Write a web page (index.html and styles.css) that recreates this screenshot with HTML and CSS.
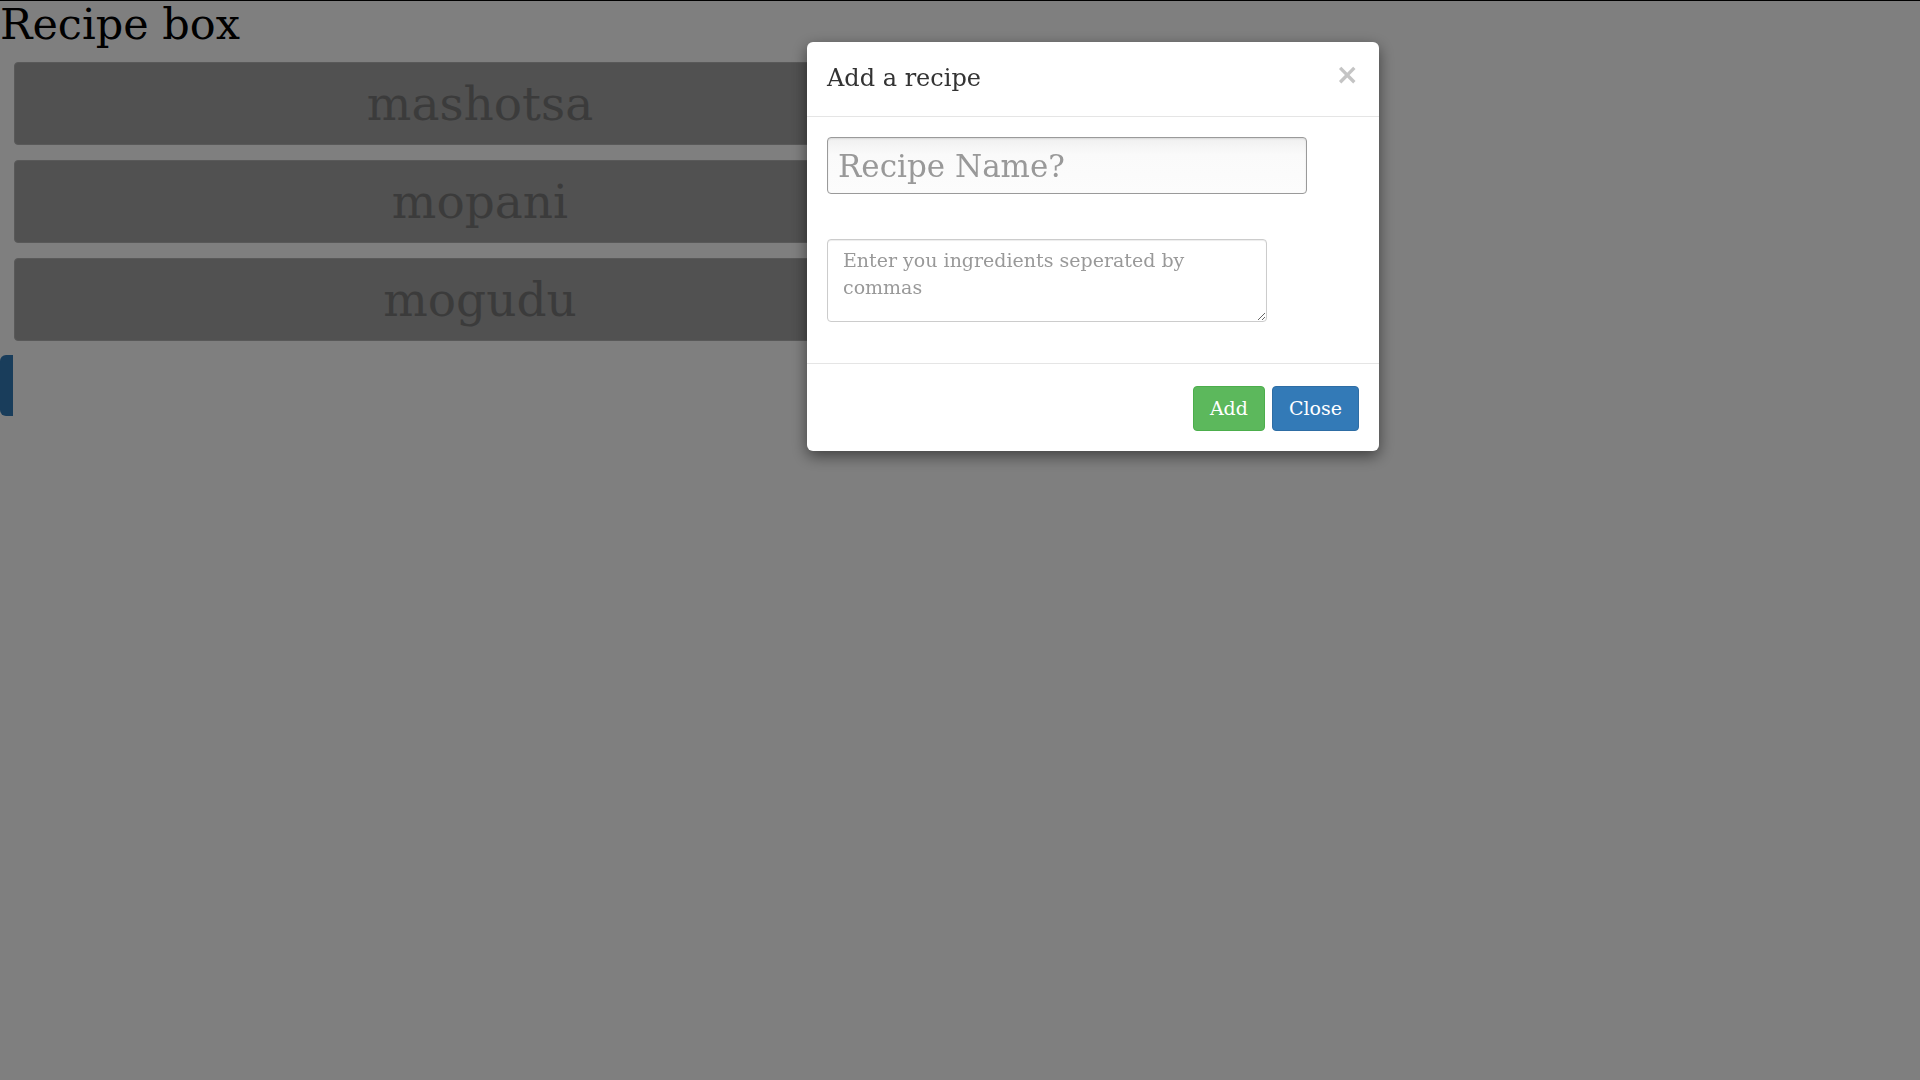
FILE: index.html
```html
<!DOCTYPE html>
<html>
<head>
<meta charset="utf-8">
<title>Recipe box</title>
<link rel="stylesheet" href="styles.css">
</head>
<body>
<div class="page">
  <h1 class="page-title">Recipe box</h1>
  <div class="recipe-list">
    <div class="recipe">mashotsa</div>
    <div class="recipe">mopani</div>
    <div class="recipe">mogudu</div>
  </div>
  <div class="add-trigger"></div>
</div>
<div class="backdrop">
  <div class="modal">
    <div class="modal-header">
      <h4 class="modal-title">Add a recipe</h4>
      <button class="close" type="button">×</button>
    </div>
    <div class="modal-body">
      <input class="name-input" type="text" placeholder="Recipe Name?">
      <textarea class="ingredients" placeholder="Enter you ingredients seperated by commas"></textarea>
    </div>
    <div class="modal-footer">
      <button class="btn btn-success" type="button">Add</button>
      <button class="btn btn-primary" type="button">Close</button>
    </div>
  </div>
</div>
</body>
</html>
```
FILE: styles.css
```css
html, body {
  margin: 0;
  padding: 0;
  background: #ffffff;
  font-family: "DejaVu Serif", serif;
  color: #000;
}
.page {
  display: flex;
  flex-direction: column;
  align-items: flex-start;
}
.page-title {
  margin: 0;
  font-size: 43px;
  font-weight: normal;
  line-height: 49px;
}
.recipe-list {
  margin: 13px 0 0 14px;
  width: 932px;
  display: flex;
  flex-direction: column;
  gap: 15px;
}
.recipe {
  box-sizing: border-box;
  height: 83px;
  background: #a2a2a2;
  border: 1px solid #b2b2b2;
  border-radius: 4px;
  color: #777;
  font-size: 47px;
  display: flex;
  align-items: center;
  justify-content: center;
}
.add-trigger {
  margin-top: 14px;
  width: 13px;
  height: 61px;
  background: #337ab7;
  border-radius: 6px 0 0 6px;
}
.backdrop {
  position: fixed;
  inset: 0;
  background: rgba(0, 0, 0, 0.5);
  border-top: 1px solid #000;
  padding: 41px 0 0 807px;
}
.modal {
  width: 572px;
  background: #fff;
  border-radius: 6px;
  box-shadow: 0 5px 15px rgba(0, 0, 0, 0.5);
}
.modal-header {
  display: flex;
  justify-content: space-between;
  align-items: flex-start;
  padding: 20px 20px 21px 20px;
  border-bottom: 1px solid #e5e5e5;
}
.modal-title {
  margin: 0;
  font-size: 24px;
  font-weight: normal;
  line-height: 33px;
  color: #333;
}
.close {
  border: 0;
  background: transparent;
  padding: 0;
  margin: -4px 0 0 0;
  font-family: "DejaVu Sans", sans-serif;
  font-size: 28px;
  font-weight: bold;
  line-height: 33px;
  color: #c4c4c4;
}
.modal-body {
  padding: 20px 20px 41px 20px;
  display: flex;
  flex-direction: column;
  align-items: flex-start;
}
.name-input {
  box-sizing: border-box;
  width: 480px;
  height: 57px;
  margin: 0 0 45px 0;
  padding: 0 10px;
  font-family: "DejaVu Serif", serif;
  font-size: 31px;
  border: 1px solid #9a9a9a;
  border-radius: 4px;
  background: linear-gradient(#f0f0f0, #fafafa 30%, #fcfcfc);
  box-shadow: inset 0 1px 2px rgba(0, 0, 0, 0.1);
  outline: none;
}
.name-input::placeholder {
  color: #999;
}
.ingredients {
  box-sizing: border-box;
  width: 440px;
  height: 83px;
  margin: 0;
  padding: 7px 15px;
  font-family: "DejaVu Serif", serif;
  font-size: 19px;
  line-height: 27px;
  border: 1px solid #ccc;
  border-radius: 4px;
  box-shadow: inset 0 1px 1px rgba(0, 0, 0, 0.075);
  resize: vertical;
  outline: none;
}
.ingredients::placeholder {
  color: #999;
}
.modal-footer {
  display: flex;
  justify-content: flex-end;
  gap: 7px;
  padding: 22px 20px 20px 20px;
  border-top: 1px solid #e5e5e5;
}
.btn {
  box-sizing: border-box;
  height: 45px;
  padding: 0 16px;
  font-family: "DejaVu Serif", serif;
  font-size: 19px;
  line-height: 27px;
  color: #fff;
  border: 1px solid transparent;
  border-radius: 4px;
}
.btn-success {
  background: #5cb85c;
  border-color: #4cae4c;
}
.btn-primary {
  background: #337ab7;
  border-color: #2e6da4;
}
```
